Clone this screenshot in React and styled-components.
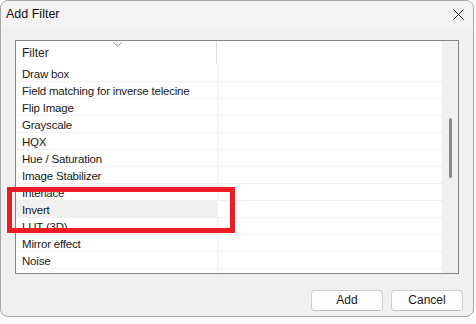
import React from 'react';
import styled, { createGlobalStyle } from 'styled-components';

const Global = createGlobalStyle`
  html, body {
    margin: 0;
    padding: 0;
    background: #fbfbfb;
    font-family: "Segoe UI", "Liberation Sans", "Noto Sans", sans-serif;
    font-size: 12px;
    color: #1a1a1a;
  }
`;

const Page = styled.div`
  width: 476px;
  height: 324px;
  overflow: hidden;
  position: relative;
`;

const Window = styled.div`
  width: 472px;
  height: 315px;
  border: 1px solid #a6a6a6;
  border-radius: 8px;
  background: #f0f0f0;
  display: flex;
  flex-direction: column;
  overflow: hidden;
  position: relative;
`;

const TitleBar = styled.div`
  height: 26px;
  flex: none;
  background: #f3f3f3;
  display: flex;
  align-items: center;
  justify-content: space-between;
  padding: 0 9px 0 5px;
`;

const Title = styled.span`
  font-size: 12.5px;
  color: #111;
  padding-bottom: 1px;
`;

const Body = styled.div`
  flex: 1;
  display: flex;
  flex-direction: column;
  padding: 13px 14px 0 14px;
`;

const ListBox = styled.div`
  width: 442px;
  height: 232px;
  border: 1px solid #858585;
  background: #fff;
  display: flex;
  overflow: hidden;
`;

const Table = styled.div`
  flex: 1;
  display: flex;
  flex-direction: column;
  overflow: hidden;
`;

const HeaderRow = styled.div`
  height: 24px;
  flex: none;
  display: flex;
  position: relative;
`;

const HeaderCell = styled.div`
  width: ${p => p.$w ? `${p.$w}px` : 'auto'};
  flex: ${p => p.$w ? 'none' : 1};
  border-right: ${p => p.$w ? '1px solid #dcdcdc' : 'none'};
  margin: 0 0 1px 0;
  padding: 5px 0 0 6px;
  box-sizing: border-box;
  position: relative;
`;

const SortMark = styled.svg`
  position: absolute;
  top: 1px;
  left: 97px;
`;

const Row = styled.div`
  height: 17px;
  flex: none;
  display: flex;
  border-bottom: 1px solid #efefef;
  box-sizing: border-box;
  background: ${p => p.$active ? '#f0f0f0' : 'transparent'};
`;

const Cell = styled.div`
  width: ${p => p.$w ? `${p.$w}px` : 'auto'};
  flex: ${p => p.$w ? 'none' : 1};
  border-right: ${p => p.$w ? '1px solid #efefef' : 'none'};
  background: ${p => p.$w ? 'transparent' : '#fff'};
  padding: 2px 0 0 6px;
  line-height: 15px;
  font-size: 11.5px;
  letter-spacing: -0.2px;
  white-space: nowrap;
  box-sizing: border-box;
`;

const ScrollTrack = styled.div`
  width: 16px;
  flex: none;
  background: #f0f0f0;
  padding-top: 77px;
  display: flex;
  justify-content: center;
`;

const Thumb = styled.div`
  width: 3px;
  height: 60px;
  border-radius: 2px;
  background: #8a8a8a;
`;

const Buttons = styled.div`
  display: flex;
  justify-content: flex-end;
  gap: 8px;
  padding: 16px 0 0 0;
  margin-right: -4px;
`;

const Button = styled.button`
  width: 72px;
  height: 21px;
  border: 1px solid #d0d0d0;
  border-bottom-color: #c0c0c0;
  border-radius: 4px;
  background: #fdfdfd;
  font-family: inherit;
  font-size: 12px;
  color: #1a1a1a;
  padding: 0 0 1px 0;
`;

const Highlight = styled.div`
  position: absolute;
  left: 7px;
  top: 187px;
  width: 218px;
  height: 36px;
  border: 5px solid #ec1c24;
`;

const filters = [
  'Draw box',
  'Field matching for inverse telecine',
  'Flip Image',
  'Grayscale',
  'HQX',
  'Hue / Saturation',
  'Image Stabilizer',
  'Interlace',
  'Invert',
  'LUT (3D)',
  'Mirror effect',
  'Noise',
  'Old film effect',
];

export default function App() {
  return (
    <Page>
      <Global />
      <Window>
        <TitleBar>
          <Title>Add Filter</Title>
          <svg width="11" height="11" viewBox="0 0 11 11">
            <path d="M0.5 0.5 L10.5 10.5 M10.5 0.5 L0.5 10.5" stroke="#222" strokeWidth="1" />
          </svg>
        </TitleBar>
        <Body>
          <ListBox>
            <Table>
              <HeaderRow>
                <HeaderCell $w={201}>
                  Filter
                  <SortMark width="9" height="5" viewBox="0 0 9 5">
                    <path d="M0.5 0.5 L4.5 4 L8.5 0.5" fill="none" stroke="#8a8a8a" strokeWidth="1" />
                  </SortMark>
                </HeaderCell>
                <HeaderCell />
              </HeaderRow>
              {filters.map(name => (
                <Row key={name} $active={name === 'Invert'}>
                  <Cell $w={202}>{name}</Cell>
                  <Cell />
                </Row>
              ))}
            </Table>
            <ScrollTrack>
              <Thumb />
            </ScrollTrack>
          </ListBox>
          <Buttons>
            <Button>Add</Button>
            <Button>Cancel</Button>
          </Buttons>
        </Body>
      </Window>
      <Highlight />
    </Page>
  );
}
